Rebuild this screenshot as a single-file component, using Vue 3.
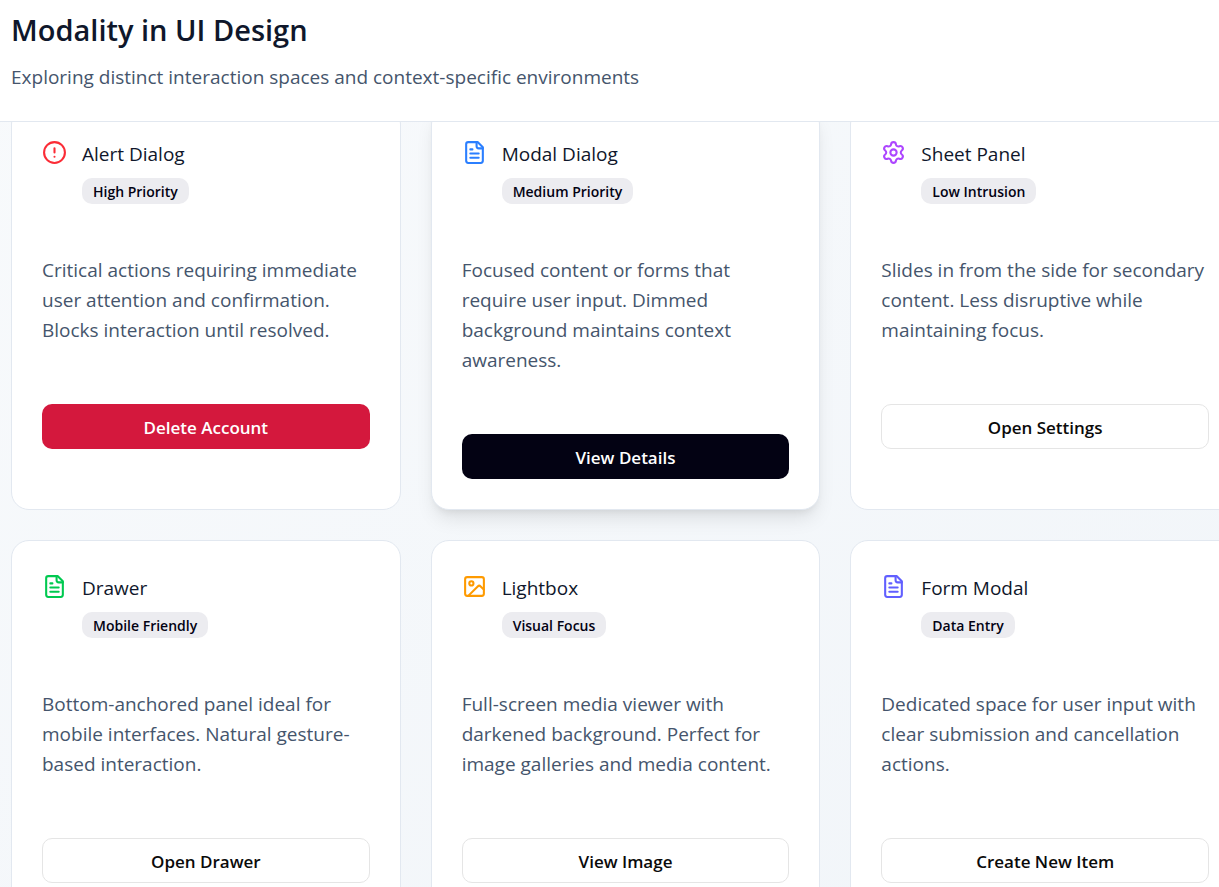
<script setup>
const cards = [
  { title: 'Alert Dialog', badge: 'High Priority', icon: 'alert', color: '#fb2c36', text: 'Critical actions requiring immediate user attention and confirmation. Blocks interaction until resolved.', action: 'Delete Account', variant: 'danger' },
  { title: 'Modal Dialog', badge: 'Medium Priority', icon: 'file', color: '#2b7fff', text: 'Focused content or forms that require user input. Dimmed background maintains context awareness.', action: 'View Details', variant: 'primary', raised: true },
  { title: 'Sheet Panel', badge: 'Low Intrusion', icon: 'gear', color: '#ad46ff', text: 'Slides in from the side for secondary content. Less disruptive while maintaining focus.', action: 'Open Settings', variant: 'outline' },
  { title: 'Drawer', badge: 'Mobile Friendly', icon: 'file', color: '#00c950', text: 'Bottom-anchored panel ideal for mobile interfaces. Natural gesture-based interaction.', action: 'Open Drawer', variant: 'outline' },
  { title: 'Lightbox', badge: 'Visual Focus', icon: 'image', color: '#fe9a00', text: 'Full-screen media viewer with darkened background. Perfect for image galleries and media content.', action: 'View Image', variant: 'outline' },
  { title: 'Form Modal', badge: 'Data Entry', icon: 'file', color: '#615fff', text: 'Dedicated space for user input with clear submission and cancellation actions.', action: 'Create New Item', variant: 'outline' },
]
</script>

<template>
  <div class="page">
    <header class="top">
      <h1>Modality in UI Design</h1>
      <p>Exploring distinct interaction spaces and context-specific environments</p>
    </header>
    <main class="grid">
      <article v-for="card in cards" :key="card.title" class="card" :class="{ raised: card.raised }">
        <div class="head">
          <svg class="icon" :style="{ color: card.color }" viewBox="0 0 24 24" fill="none" stroke="currentColor" stroke-width="2" stroke-linecap="round" stroke-linejoin="round" aria-hidden="true">
            <template v-if="card.icon === 'alert'">
              <circle cx="12" cy="12" r="10" />
              <path d="M12 8v4M12 16h.01" />
            </template>
            <template v-else-if="card.icon === 'file'">
              <path d="M15 2H6a2 2 0 0 0-2 2v16a2 2 0 0 0 2 2h12a2 2 0 0 0 2-2V7Z" />
              <path d="M14 2v4a2 2 0 0 0 2 2h4M10 9H8M16 13H8M16 17H8" />
            </template>
            <template v-else-if="card.icon === 'gear'">
              <path d="M9.671 4.136a2.34 2.34 0 0 1 4.659 0 2.34 2.34 0 0 0 3.319 1.915 2.34 2.34 0 0 1 2.33 4.033 2.34 2.34 0 0 0 0 3.831 2.34 2.34 0 0 1-2.33 4.033 2.34 2.34 0 0 0-3.319 1.915 2.34 2.34 0 0 1-4.659 0 2.34 2.34 0 0 0-3.32-1.915 2.34 2.34 0 0 1-2.33-4.033 2.34 2.34 0 0 0 0-3.831A2.34 2.34 0 0 1 6.35 6.051a2.34 2.34 0 0 0 3.319-1.915" />
              <circle cx="12" cy="12" r="3" />
            </template>
            <template v-else>
              <rect x="3" y="3" width="18" height="18" rx="2" />
              <circle cx="9" cy="9" r="2" />
              <path d="m21 15-3.086-3.086a2 2 0 0 0-2.828 0L6 21" />
            </template>
          </svg>
          <div>
            <h2>{{ card.title }}</h2>
            <span class="badge">{{ card.badge }}</span>
          </div>
        </div>
        <p class="text">{{ card.text }}</p>
        <button type="button" class="btn" :class="card.variant">{{ card.action }}</button>
      </article>
    </main>
  </div>
</template>

<style>
body {
  margin: 0;
}
</style>

<style scoped>
.page {
  height: 100vh;
  overflow: hidden;
  background: linear-gradient(to bottom right, #f8fafc, #f1f5f9);
  font-family: "Segoe UI", "Open Sans", "Noto Sans", sans-serif;
  color: #0f172b;
}
h1, h2, p {
  margin: 0;
  font-weight: 400;
}
.top {
  position: relative;
  z-index: 1;
  padding: 7px 11px 29px;
  background: #fff;
  border-bottom: 1px solid #e2e8f0;
}
h1 {
  margin-bottom: 10px;
  font-size: 29px;
  line-height: 45px;
  font-weight: 600;
}
.top p {
  font-size: 19px;
  line-height: 30px;
  color: #45556c;
}
.grid {
  display: grid;
  grid-template-columns: repeat(3, minmax(0, 1fr));
  gap: 30px;
  margin: -16px -21px 0 11px;
}
.card {
  display: flex;
  flex-direction: column;
  padding: 30px;
  border: 1px solid #e2e8f0;
  border-radius: 18px;
  background: #fff;
}
.raised {
  box-shadow: 0 12px 19px -4px rgb(0 0 0 / 10%), 0 5px 8px -5px rgb(0 0 0 / 10%);
}
.head {
  display: flex;
  gap: 15px;
  margin-bottom: 51px;
}
.icon {
  flex: none;
  width: 25px;
  height: 25px;
  margin-top: 3px;
}
h2 {
  margin-bottom: 7px;
  font-size: 19px;
  line-height: 34px;
}
.badge {
  display: block;
  width: fit-content;
  padding: 4px 11px 2px;
  border-radius: 10px;
  background: #ececf0;
  color: #030213;
  font-size: 14px;
  line-height: 20px;
  font-weight: 600;
}
.text {
  margin-bottom: 59px;
  font-size: 19px;
  line-height: 30px;
  color: #45556c;
}
.btn {
  height: 45px;
  padding: 2px 20px 0;
  border: 1px solid transparent;
  border-radius: 10px;
  font: 600 17px/25px "Segoe UI", "Open Sans", "Noto Sans", sans-serif;
  cursor: pointer;
}
.danger {
  background: #d4183d;
  color: #fff;
}
.primary {
  background: #030213;
  color: #fff;
}
.outline {
  background: #fff;
  border-color: #e5e5e5;
  color: #0a0a0a;
}
</style>
